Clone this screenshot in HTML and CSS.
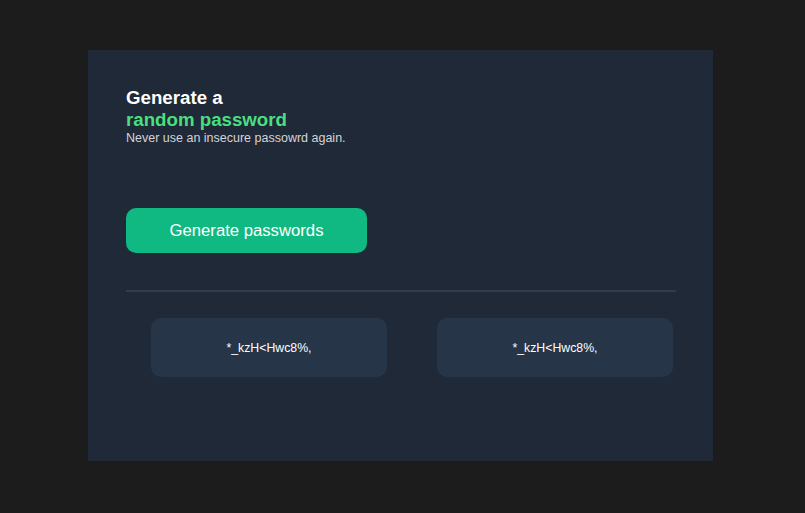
FILE: index.html
```html
<!DOCTYPE html>
<html>
<head>
<meta charset="utf-8">
<link rel="stylesheet" href="styles.css">
</head>
<body>
<main class="card">
  <header class="intro">
    <h1 class="title">Generate a<br><span class="accent">random password</span></h1>
    <p class="subtitle">Never use an insecure passowrd again.</p>
  </header>
  <button class="generate">Generate passwords</button>
  <hr class="divider">
  <section class="results">
    <div class="pw">*_kzH&lt;Hwc8%,</div>
    <div class="pw">*_kzH&lt;Hwc8%,</div>
  </section>
</main>
</body>
</html>
```
FILE: styles.css
```css
html, body {
  margin: 0;
  padding: 0;
  background: #1c1c1c;
  font-family: "Liberation Sans", Arial, sans-serif;
}
body {
  padding: 50px 0 0 88px;
}
.card {
  width: 625px;
  height: 411px;
  box-sizing: border-box;
  background: #1f2937;
  padding: 37px 37px 0 38px;
  display: flex;
  flex-direction: column;
}
.title {
  margin: 0;
  font-size: 18.7px;
  line-height: 22px;
  font-weight: 700;
  color: #ffffff;
}
.accent {
  color: #4ade80;
}
.subtitle {
  margin: 0;
  font-size: 12.5px;
  line-height: 14px;
  color: #d5d4d8;
}
.generate {
  margin-top: 63px;
  width: 241px;
  height: 45px;
  border: none;
  border-radius: 10px;
  background: #10b981;
  color: #ffffff;
  font-family: inherit;
  font-size: 16.7px;
  align-self: flex-start;
}
.divider {
  margin: 37px 0 0 0;
  border: none;
  height: 2px;
  background: #2f3c4b;
}
.results {
  margin-top: 26px;
  padding-left: 25px;
  display: flex;
  gap: 50px;
}
.pw {
  width: 236px;
  height: 59px;
  border-radius: 10px;
  background: #273549;
  color: #ffffff;
  font-size: 12.3px;
  display: flex;
  align-items: center;
  justify-content: center;
}
```
